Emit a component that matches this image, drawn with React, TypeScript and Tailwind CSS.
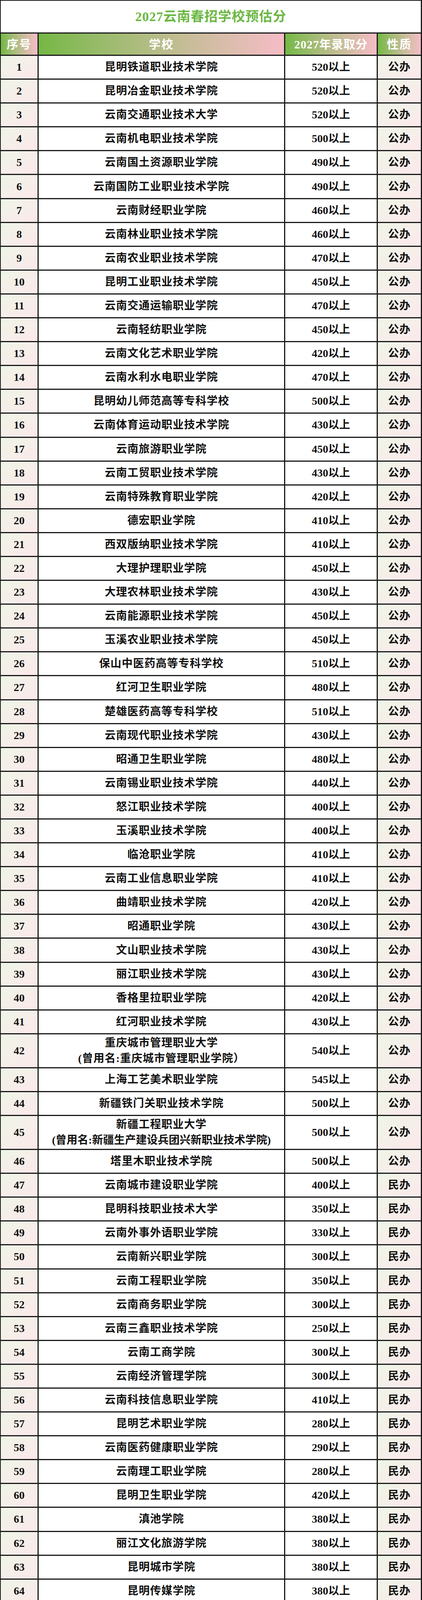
import React from "react";

type Row = [number, string[], string, string];

const rows: Row[] = [
  [1, ["昆明铁道职业技术学院"], "520以上", "公办"],
  [2, ["昆明冶金职业技术学院"], "520以上", "公办"],
  [3, ["云南交通职业技术大学"], "520以上", "公办"],
  [4, ["云南机电职业技术学院"], "500以上", "公办"],
  [5, ["云南国土资源职业学院"], "490以上", "公办"],
  [6, ["云南国防工业职业技术学院"], "490以上", "公办"],
  [7, ["云南财经职业学院"], "460以上", "公办"],
  [8, ["云南林业职业技术学院"], "460以上", "公办"],
  [9, ["云南农业职业技术学院"], "470以上", "公办"],
  [10, ["昆明工业职业技术学院"], "450以上", "公办"],
  [11, ["云南交通运输职业学院"], "470以上", "公办"],
  [12, ["云南轻纺职业学院"], "450以上", "公办"],
  [13, ["云南文化艺术职业学院"], "420以上", "公办"],
  [14, ["云南水利水电职业学院"], "470以上", "公办"],
  [15, ["昆明幼儿师范高等专科学校"], "500以上", "公办"],
  [16, ["云南体育运动职业技术学院"], "430以上", "公办"],
  [17, ["云南旅游职业学院"], "450以上", "公办"],
  [18, ["云南工贸职业技术学院"], "430以上", "公办"],
  [19, ["云南特殊教育职业学院"], "420以上", "公办"],
  [20, ["德宏职业学院"], "410以上", "公办"],
  [21, ["西双版纳职业技术学院"], "410以上", "公办"],
  [22, ["大理护理职业学院"], "450以上", "公办"],
  [23, ["大理农林职业技术学院"], "430以上", "公办"],
  [24, ["云南能源职业技术学院"], "450以上", "公办"],
  [25, ["玉溪农业职业技术学院"], "450以上", "公办"],
  [26, ["保山中医药高等专科学校"], "510以上", "公办"],
  [27, ["红河卫生职业学院"], "480以上", "公办"],
  [28, ["楚雄医药高等专科学校"], "510以上", "公办"],
  [29, ["云南现代职业技术学院"], "430以上", "公办"],
  [30, ["昭通卫生职业学院"], "480以上", "公办"],
  [31, ["云南锡业职业技术学院"], "440以上", "公办"],
  [32, ["怒江职业技术学院"], "400以上", "公办"],
  [33, ["玉溪职业技术学院"], "400以上", "公办"],
  [34, ["临沧职业学院"], "410以上", "公办"],
  [35, ["云南工业信息职业学院"], "410以上", "公办"],
  [36, ["曲靖职业技术学院"], "420以上", "公办"],
  [37, ["昭通职业学院"], "430以上", "公办"],
  [38, ["文山职业技术学院"], "430以上", "公办"],
  [39, ["丽江职业技术学院"], "430以上", "公办"],
  [40, ["香格里拉职业学院"], "420以上", "公办"],
  [41, ["红河职业技术学院"], "430以上", "公办"],
  [42, ["重庆城市管理职业大学", "(曾用名:重庆城市管理职业学院）"], "540以上", "公办"],
  [43, ["上海工艺美术职业学院"], "545以上", "公办"],
  [44, ["新疆铁门关职业技术学院"], "500以上", "公办"],
  [45, ["新疆工程职业大学", "(曾用名:新疆生产建设兵团兴新职业技术学院)"], "500以上", "公办"],
  [46, ["塔里木职业技术学院"], "500以上", "公办"],
  [47, ["云南城市建设职业学院"], "400以上", "民办"],
  [48, ["昆明科技职业技术大学"], "350以上", "民办"],
  [49, ["云南外事外语职业学院"], "330以上", "民办"],
  [50, ["云南新兴职业学院"], "300以上", "民办"],
  [51, ["云南工程职业学院"], "350以上", "民办"],
  [52, ["云南商务职业学院"], "300以上", "民办"],
  [53, ["云南三鑫职业技术学院"], "250以上", "民办"],
  [54, ["云南工商学院"], "300以上", "民办"],
  [55, ["云南经济管理学院"], "300以上", "民办"],
  [56, ["云南科技信息职业学院"], "410以上", "民办"],
  [57, ["昆明艺术职业学院"], "280以上", "民办"],
  [58, ["云南医药健康职业学院"], "290以上", "民办"],
  [59, ["云南理工职业学院"], "280以上", "民办"],
  [60, ["昆明卫生职业学院"], "420以上", "民办"],
  [61, ["滇池学院"], "380以上", "民办"],
  [62, ["丽江文化旅游学院"], "380以上", "民办"],
  [63, ["昆明城市学院"], "380以上", "民办"],
  [64, ["昆明传媒学院"], "380以上", "民办"],
];

const font = { fontFamily: '"Liberation Serif", "Noto Sans CJK SC", serif' };

export default function App() {
  return (
    <div className="w-[1080px] h-[4108px] bg-white" style={font}>
      <div className="w-[1080px] border-t-2 border-l-2 border-r-[3px] border-[#1a1a1a]">
        <div className="h-[81px] flex items-center justify-center text-[34px] font-bold tracking-[1px] text-[#6cb844]">
          2027云南春招学校预估分
        </div>
        <div className="flex h-[60px] border-t-[3px] border-b-[3px] border-[#1a1a1a] text-white font-bold text-[30px] tracking-[2px]">
          <div className="w-[97px] border-r-[3px] border-[#1a1a1a] bg-linear-to-r from-[#74b843] to-[#f6bcc7] flex items-center justify-center">序号</div>
          <div className="w-[631px] border-r-[3px] border-[#1a1a1a] bg-linear-to-r from-[#74b843] to-[#f6bcc7] flex items-center justify-center">学校</div>
          <div className="w-[237px] border-r-[3px] border-[#1a1a1a] bg-linear-to-r from-[#74b843] to-[#f6bcc7] flex items-center justify-center tracking-[1px]">2027年录取分</div>
          <div className="flex-1 bg-linear-to-r from-[#74b843] to-[#f6bcc7] flex items-center justify-center">性质</div>
        </div>
        {rows.map(([n, names, score, kind]) => (
          <div
            key={n}
            className={`flex border-b-[3px] border-[#1a1a1a] text-[28px] font-bold text-[#111] ${names.length > 1 ? "h-[87px]" : "h-[61.1px]"}`}
          >
            <div className="w-[97px] border-r-[3px] border-[#1a1a1a] bg-linear-to-br from-[#eef5e7] to-[#fce8eb] flex items-center justify-center">
              {n}
            </div>
            <div className="w-[631px] border-r-[3px] border-[#1a1a1a] flex flex-col items-center justify-center leading-[40px]">
              {names.map((t, i) => (
                <div key={i} className={t.length > 20 ? "tracking-[0px]" : "tracking-[1px]"}>
                  {t}
                </div>
              ))}
            </div>
            <div className="w-[237px] border-r-[3px] border-[#1a1a1a] flex items-center justify-center">
              {score}
            </div>
            <div className="flex-1 bg-linear-to-br from-[#eef5e7] to-[#fce8eb] flex items-center justify-center tracking-[1px]">
              {kind}
            </div>
          </div>
        ))}
      </div>
    </div>
  );
}
